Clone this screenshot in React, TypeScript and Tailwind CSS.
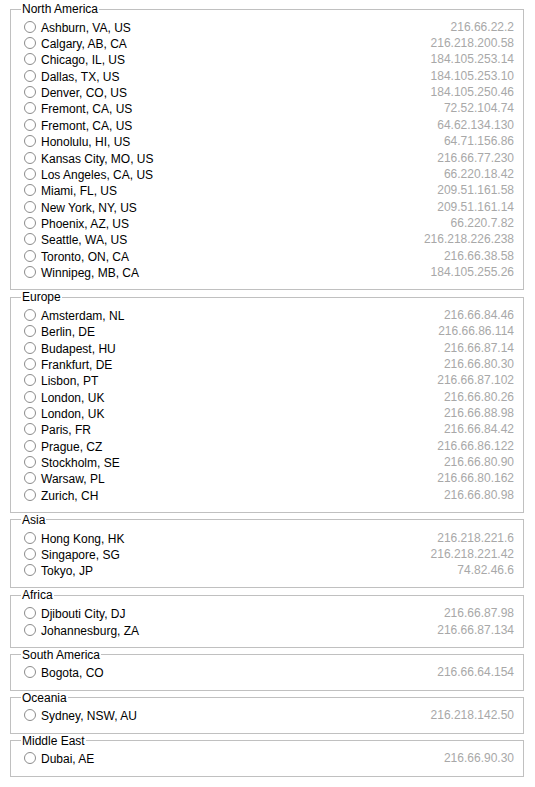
import React from "react";

type Row = [string, string];
type Group = { name: string; rows: Row[] };

const groups: Group[] = [
  {
    name: "North America",
    rows: [
      ["Ashburn, VA, US", "216.66.22.2"],
      ["Calgary, AB, CA", "216.218.200.58"],
      ["Chicago, IL, US", "184.105.253.14"],
      ["Dallas, TX, US", "184.105.253.10"],
      ["Denver, CO, US", "184.105.250.46"],
      ["Fremont, CA, US", "72.52.104.74"],
      ["Fremont, CA, US", "64.62.134.130"],
      ["Honolulu, HI, US", "64.71.156.86"],
      ["Kansas City, MO, US", "216.66.77.230"],
      ["Los Angeles, CA, US", "66.220.18.42"],
      ["Miami, FL, US", "209.51.161.58"],
      ["New York, NY, US", "209.51.161.14"],
      ["Phoenix, AZ, US", "66.220.7.82"],
      ["Seattle, WA, US", "216.218.226.238"],
      ["Toronto, ON, CA", "216.66.38.58"],
      ["Winnipeg, MB, CA", "184.105.255.26"],
    ],
  },
  {
    name: "Europe",
    rows: [
      ["Amsterdam, NL", "216.66.84.46"],
      ["Berlin, DE", "216.66.86.114"],
      ["Budapest, HU", "216.66.87.14"],
      ["Frankfurt, DE", "216.66.80.30"],
      ["Lisbon, PT", "216.66.87.102"],
      ["London, UK", "216.66.80.26"],
      ["London, UK", "216.66.88.98"],
      ["Paris, FR", "216.66.84.42"],
      ["Prague, CZ", "216.66.86.122"],
      ["Stockholm, SE", "216.66.80.90"],
      ["Warsaw, PL", "216.66.80.162"],
      ["Zurich, CH", "216.66.80.98"],
    ],
  },
  {
    name: "Asia",
    rows: [
      ["Hong Kong, HK", "216.218.221.6"],
      ["Singapore, SG", "216.218.221.42"],
      ["Tokyo, JP", "74.82.46.6"],
    ],
  },
  {
    name: "Africa",
    rows: [
      ["Djibouti City, DJ", "216.66.87.98"],
      ["Johannesburg, ZA", "216.66.87.134"],
    ],
  },
  { name: "South America", rows: [["Bogota, CO", "216.66.64.154"]] },
  { name: "Oceania", rows: [["Sydney, NSW, AU", "216.218.142.50"]] },
  { name: "Middle East", rows: [["Dubai, AE", "216.66.90.30"]] },
];

export default function App() {
  return (
    <div className="w-[535px] min-h-[787px] bg-white pl-[10px] pr-[11px] pt-[2px] font-['Liberation_Sans',Arial,sans-serif] text-[12px] text-black">
      {groups.map((g) => (
        <fieldset
          key={g.name}
          className="border border-[#c0c0c0] pl-[10px] pr-[9px] pt-[3.6px] pb-[8px]"
        >
          <legend className="px-[1px] leading-[14px] text-black">{g.name}</legend>
          {g.rows.map(([city, ip], i) => (
            <label
              key={g.name + i}
              className="flex h-[16.35px] items-center justify-between leading-[14px]"
            >
              <span className="flex items-center">
                <span className="ml-[3px] mb-[2px] box-border h-[12px] w-[12px] rounded-full border border-[#8c8c8c] bg-white" />
                <span className="ml-[5px]">{city}</span>
              </span>
              <span className="-translate-y-[1.5px] text-[#a8a8a8]">{ip}</span>
            </label>
          ))}
        </fieldset>
      ))}
    </div>
  );
}
